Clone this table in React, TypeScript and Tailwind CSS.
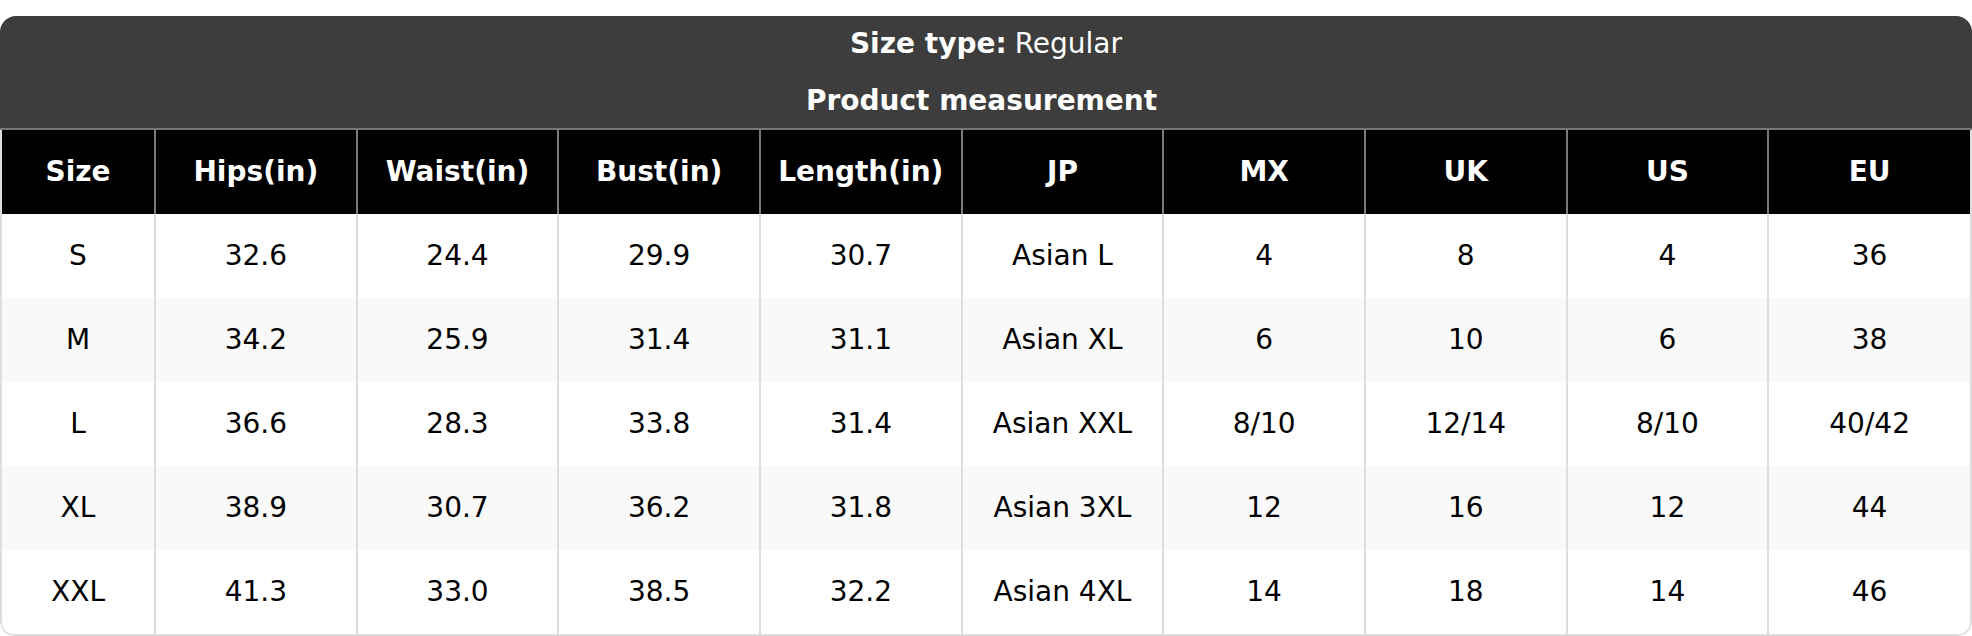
import React from "react";

const headers = ["Size", "Hips(in)", "Waist(in)", "Bust(in)", "Length(in)", "JP", "MX", "UK", "US", "EU"];
const rows = [
  ["S", "32.6", "24.4", "29.9", "30.7", "Asian L", "4", "8", "4", "36"],
  ["M", "34.2", "25.9", "31.4", "31.1", "Asian XL", "6", "10", "6", "38"],
  ["L", "36.6", "28.3", "33.8", "31.4", "Asian XXL", "8/10", "12/14", "8/10", "40/42"],
  ["XL", "38.9", "30.7", "36.2", "31.8", "Asian 3XL", "12", "16", "12", "44"],
  ["XXL", "41.3", "33.0", "38.5", "32.2", "Asian 4XL", "14", "18", "14", "46"],
];

export default function App() {
  return (
    <div className="pt-4 bg-white w-[1972px]" style={{ fontFamily: '"DejaVu Sans", sans-serif' }}>
      <div className="rounded-t-[16px] rounded-b-[14px] overflow-hidden">
        <div className="bg-[#3d3d3d] text-white text-[28px] border-b-2 border-[#777777]">
          <div className="h-[56px] flex items-center justify-center">
            <span className="font-bold">Size type:</span>
            <span className="ml-[8px]">Regular</span>
          </div>
          <div className="h-[56px] flex items-start justify-center font-bold pt-[13px] pr-[9px] leading-[32px]">
            Product measurement
          </div>
        </div>
        <div className="border-x-2 border-b-2 border-[#dddddd] rounded-b-[14px] overflow-hidden">
          <table className="w-full table-fixed border-collapse text-[28px]">
            <colgroup>
              <col className="w-[153px]" />
              <col />
              <col />
              <col />
              <col />
              <col />
              <col />
              <col />
              <col />
              <col />
            </colgroup>
            <thead>
              <tr className="bg-black text-white h-[84px]">
                {headers.map((h, i) => (
                  <th
                    key={h}
                    className={
                      i < headers.length - 1
                        ? "font-bold text-center border-r-2 border-[#7a7a7a] p-0"
                        : "font-bold text-center p-0"
                    }
                  >
                    {h}
                  </th>
                ))}
              </tr>
            </thead>
            <tbody>
              {rows.map((r, ri) => (
                <tr key={ri} className={ri % 2 === 1 ? "bg-[#f9f9f9] h-[84px]" : "bg-white h-[84px]"}>
                  {r.map((c, ci) => (
                    <td
                      key={ci}
                      className={
                        ci < r.length - 1
                          ? "text-center text-black border-r-2 border-[#dddddd] p-0"
                          : "text-center text-black p-0"
                      }
                    >
                      {c}
                    </td>
                  ))}
                </tr>
              ))}
            </tbody>
          </table>
        </div>
      </div>
    </div>
  );
}
